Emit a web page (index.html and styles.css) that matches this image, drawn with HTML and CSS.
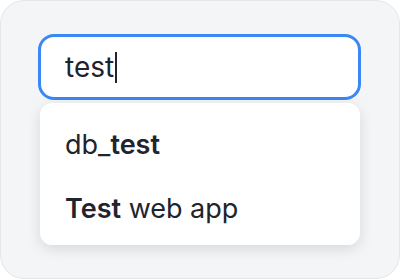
FILE: index.html
```html
<!DOCTYPE html>
<html lang="en">
<head>
    <meta charset="UTF-8">
    <title>Search</title>
    <link rel="stylesheet" href="styles.css">
</head>
<body>
<div class="panel">
    <div class="search-box">
        <span class="query">test</span><span class="caret"></span>
    </div>
    <div class="suggestions">
        <div class="suggestion">db_<b>test</b></div>
        <div class="suggestion"><b>Test</b> web app</div>
    </div>
</div>
</body>
</html>
```

FILE: styles.css
```css
* {
    box-sizing: border-box;
}

body {
    margin: 0;
    background-color: #fff;
    font-family: Inter, "Noto Sans", sans-serif;
    color: #21232e;
}

.panel {
    width: 400px;
    height: 279px;
    background-color: #f4f5f7;
    border: 1px solid #e4e6ea;
    border-radius: 24px;
    padding: 33px 0 0 37px;
    display: flex;
    flex-direction: column;
}

.search-box {
    width: 323px;
    height: 66px;
    border: 3px solid #3b87f6;
    border-radius: 16px;
    background-color: #fff;
    padding-left: 24px;
    display: flex;
    align-items: center;
    font-size: 28px;
}

.caret {
    width: 2px;
    height: 31px;
    margin-left: 1px;
    background-color: #21232e;
}

.suggestions {
    width: 320px;
    margin: 3px 0 0 2px;
    padding: 10px 0 4px 0;
    background-color: #fff;
    border-radius: 12px;
    /* soft drop shadow under the menu */
    box-shadow: 0 4px 14px rgba(0, 0, 0, 0.12);
}

.suggestion {
    height: 64px;
    line-height: 64px;
    padding-left: 25px;
    font-size: 27px;
}

.suggestion b {
    font-weight: 600;
}
```
